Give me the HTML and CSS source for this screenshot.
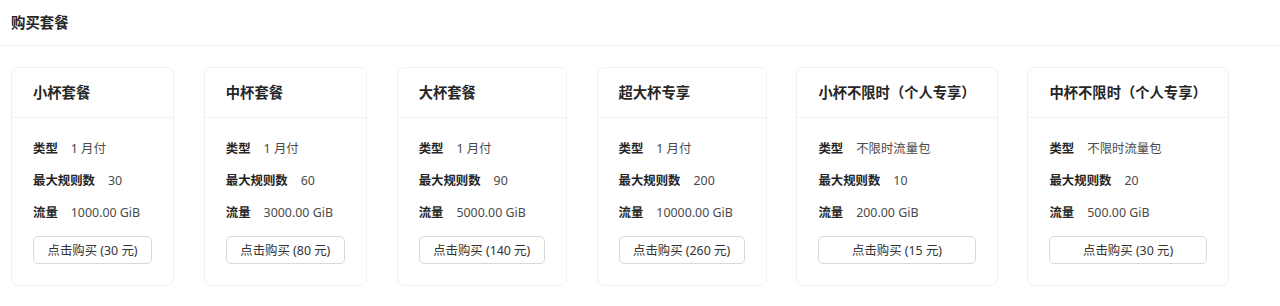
FILE: index.html
```html
<!DOCTYPE html>
<html lang="zh-CN">

<head>
  <meta charset="UTF-8">
  <meta name="viewport" content="width=device-width, initial-scale=1.0">
  <title>购买套餐</title>
  <link rel="stylesheet" href="styles.css">
</head>

<body>
  <div class="page-header">购买套餐</div>

  <div class="plans">
    <div class="plan">
      <div class="plan-head">小杯套餐</div>
      <div class="plan-body">
        <div class="plan-row"><span class="label">类型</span><span class="value">1 月付</span></div>
        <div class="plan-row"><span class="label">最大规则数</span><span class="value">30</span></div>
        <div class="plan-row"><span class="label">流量</span><span class="value">1000.00 GiB</span></div>
        <button class="buy">点击购买 (30 元)</button>
      </div>
    </div>

    <div class="plan">
      <div class="plan-head">中杯套餐</div>
      <div class="plan-body">
        <div class="plan-row"><span class="label">类型</span><span class="value">1 月付</span></div>
        <div class="plan-row"><span class="label">最大规则数</span><span class="value">60</span></div>
        <div class="plan-row"><span class="label">流量</span><span class="value">3000.00 GiB</span></div>
        <button class="buy">点击购买 (80 元)</button>
      </div>
    </div>

    <div class="plan">
      <div class="plan-head">大杯套餐</div>
      <div class="plan-body">
        <div class="plan-row"><span class="label">类型</span><span class="value">1 月付</span></div>
        <div class="plan-row"><span class="label">最大规则数</span><span class="value">90</span></div>
        <div class="plan-row"><span class="label">流量</span><span class="value">5000.00 GiB</span></div>
        <button class="buy">点击购买 (140 元)</button>
      </div>
    </div>

    <div class="plan">
      <div class="plan-head">超大杯专享</div>
      <div class="plan-body">
        <div class="plan-row"><span class="label">类型</span><span class="value">1 月付</span></div>
        <div class="plan-row"><span class="label">最大规则数</span><span class="value">200</span></div>
        <div class="plan-row"><span class="label">流量</span><span class="value">10000.00 GiB</span></div>
        <button class="buy">点击购买 (260 元)</button>
      </div>
    </div>

    <div class="plan">
      <div class="plan-head">小杯不限时（个人专享）</div>
      <div class="plan-body">
        <div class="plan-row"><span class="label">类型</span><span class="value">不限时流量包</span></div>
        <div class="plan-row"><span class="label">最大规则数</span><span class="value">10</span></div>
        <div class="plan-row"><span class="label">流量</span><span class="value">200.00 GiB</span></div>
        <button class="buy">点击购买 (15 元)</button>
      </div>
    </div>

    <div class="plan">
      <div class="plan-head">中杯不限时（个人专享）</div>
      <div class="plan-body">
        <div class="plan-row"><span class="label">类型</span><span class="value">不限时流量包</span></div>
        <div class="plan-row"><span class="label">最大规则数</span><span class="value">20</span></div>
        <div class="plan-row"><span class="label">流量</span><span class="value">500.00 GiB</span></div>
        <button class="buy">点击购买 (30 元)</button>
      </div>
    </div>
  </div>
</body>

</html>
```

FILE: styles.css
```css
body {
  margin: 0;
  background-color: white;
  color: #262626;
  font-family: "Noto Sans", "Noto Sans CJK SC", sans-serif;
}

.page-header {
  height: 45px;
  line-height: 45px;
  padding: 0 11px;
  border-bottom: 1px solid #f0f0f0;
  font-size: 14.4px;
  font-weight: bold;
}

.plans {
  display: flex;
  align-items: flex-start;
  gap: 29.8px;
  padding: 21px 11px;
}

.plan {
  flex: none;
  display: flex;
  flex-direction: column;
  border: 1px solid #f0f0f0;
  border-radius: 7px;
}

.plan-head {
  height: 49px;
  line-height: 49px;
  padding: 0 21px;
  border-bottom: 1px solid #f0f0f0;
  font-size: 14.3px;
  font-weight: bold;
  white-space: nowrap;
}

.plan-body {
  display: flex;
  flex-direction: column;
  padding: 21px 21px 21px;
}

.plan-row {
  height: 20px;
  line-height: 20px;
  margin-bottom: 12px;
  font-size: 12.4px;
  white-space: nowrap;
}

.label {
  font-weight: bold;
  margin-right: 13px;
}

.value {
  color: #4a4a4a;
}

.buy {
  margin-top: 1px;
  height: 28px;
  padding: 0 13.5px;
  border: 1px solid #d9d9d9;
  border-radius: 5px;
  background-color: white;
  color: #333;
  font-family: inherit;
  font-size: 12.4px;
  white-space: nowrap;
}

.buy:hover {
  cursor: pointer;
  border-color: #4096ff;
  color: #4096ff;
}
```
